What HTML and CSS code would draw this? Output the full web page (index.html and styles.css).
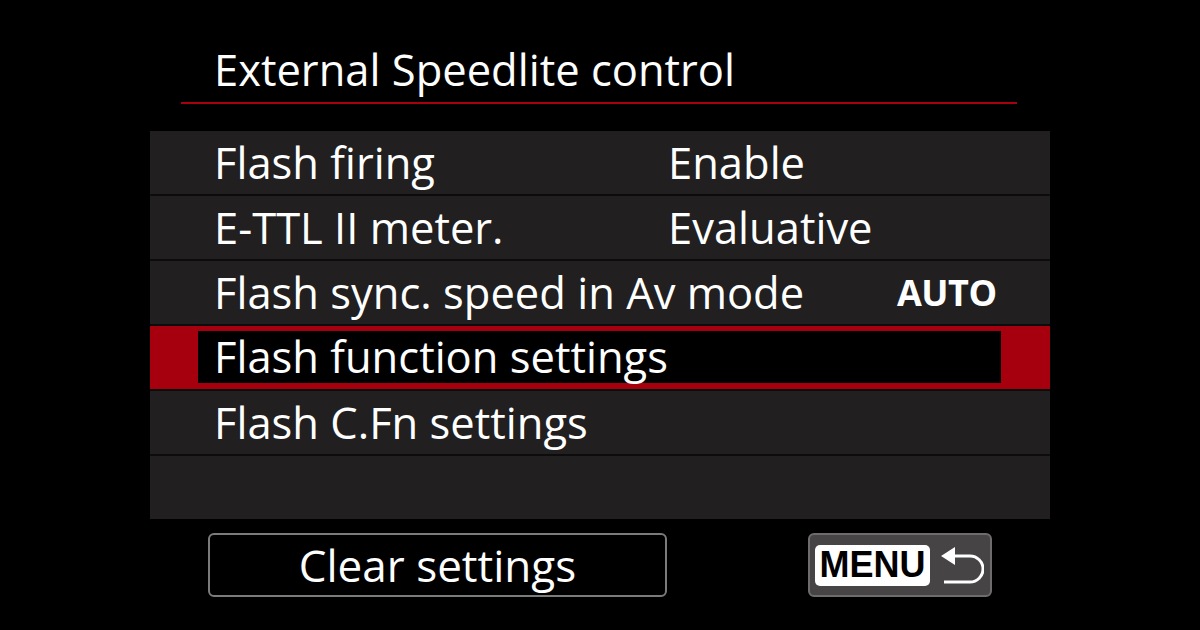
FILE: index.html
```html
<!DOCTYPE html>
<html lang="en">
<head>
<meta charset="utf-8">
<title>External Speedlite control</title>
<link rel="stylesheet" href="styles.css">
</head>
<body>
<div class="screen">
  <header class="title-bar">
    <h1 class="title">External Speedlite control</h1>
  </header>
  <ul class="menu-list">
    <li class="row"><span class="label">Flash firing</span><span class="value">Enable</span></li>
    <li class="row"><span class="label">E-TTL II meter.</span><span class="value">Evaluative</span></li>
    <li class="row"><span class="label">Flash sync. speed in Av mode</span><span class="value value-bold">AUTO</span></li>
    <li class="row row-selected"><div class="selected-inner"><span class="label">Flash function settings</span></div></li>
    <li class="row"><span class="label">Flash C.Fn settings</span></li>
    <li class="row row-empty"></li>
  </ul>
  <footer class="footer">
    <div class="btn btn-clear">Clear settings</div>
    <div class="btn btn-menu">
      <span class="menu-key">MENU</span>
      <svg class="return-icon" width="48" height="40" viewBox="0 0 48 40">
        <path d="M17 11 H34 A13 13 0 0 1 34 37 H8" fill="none" stroke="#fff" stroke-width="3"/>
        <path d="M5 11 L19 2 L19 20 Z" fill="#fff"/>
      </svg>
    </div>
  </footer>
</div>
</body>
</html>
```
FILE: styles.css
```css
* { box-sizing: border-box; }
html, body { margin: 0; padding: 0; }
body {
  background: #000;
  width: 1200px;
  height: 630px;
  overflow: hidden;
  font-family: "Open Sans", "Noto Sans", sans-serif;
  color: #fff;
}
.screen {
  display: flex;
  flex-direction: column;
  padding-top: 41px;
}
.title-bar {
  margin: 0 183px 0 181px;
  border-bottom: 2px solid #a8000f;
  height: 63px;
}
.title {
  margin: 0;
  padding-left: 33px;
  font-size: 43.5px;
  font-weight: 400;
  line-height: 58px;
  white-space: nowrap;
}
.menu-list {
  list-style: none;
  margin: 27px 150px 0;
  padding: 0;
  display: flex;
  flex-direction: column;
  gap: 2px;
  background: #0c0c0c;
}
.row {
  height: 63px;
  background: #211f20;
  display: flex;
  align-items: center;
  padding-left: 64px;
  font-size: 43.5px;
  line-height: 63px;
}
.label { width: 454px; white-space: nowrap; }
.value-bold {
  font-weight: 700;
  font-size: 36px;
  margin-left: 229px;
  letter-spacing: -0.5px;
}
.row-selected {
  background: #a6000e;
  padding: 5px 49px 6px 48px;
}
.selected-inner {
  background: #000;
  flex: 1;
  height: 100%;
  display: flex;
  align-items: center;
  padding-left: 16px;
  line-height: 52px;
}
.footer {
  display: flex;
  margin: 14px 0 0 208px;
  gap: 141px;
}
.btn {
  height: 64px;
  border-radius: 6px;
  display: flex;
  align-items: center;
}
.btn-clear {
  width: 459px;
  border: 2px solid #7b7b7b;
  justify-content: center;
  font-size: 44px;
  line-height: 60px;
}
.btn-menu {
  width: 184px;
  background: #464445;
  border: 2px solid #6e6c6d;
  padding-left: 5px;
  gap: 6px;
}
.menu-key {
  background: #fff;
  color: #000;
  border-radius: 5px;
  width: 115px;
  height: 41px;
  display: flex;
  align-items: center;
  justify-content: center;
  font-family: "Liberation Sans", Arial, sans-serif;
  font-weight: 700;
  font-size: 36px;
  letter-spacing: 0;
}
.return-icon { display: block; }
```
